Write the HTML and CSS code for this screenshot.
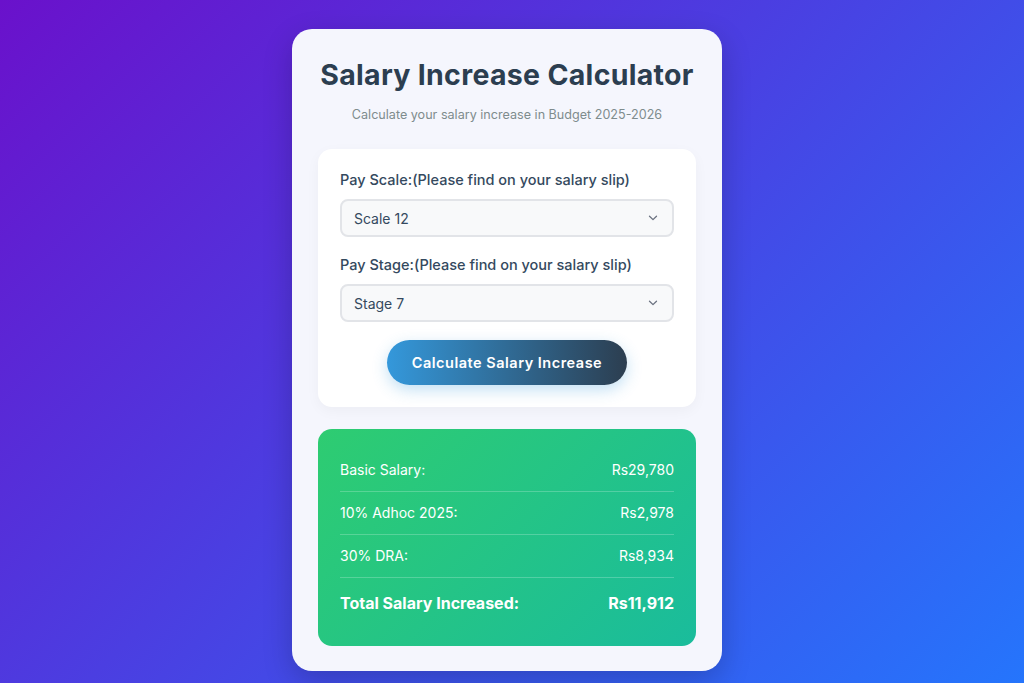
FILE: index.html
```html
<!DOCTYPE html>
<html lang="en">
<head>
<meta charset="utf-8">
<title>Salary Increase Calculator</title>
<link rel="stylesheet" href="styles.css">
</head>
<body>
<div class="card">
  <h1 class="title">Salary Increase Calculator</h1>
  <p class="subtitle">Calculate your salary increase in Budget 2025-2026</p>
  <div class="form-box">
    <label class="label">Pay Scale:(Please find on your salary slip)</label>
    <div class="select-wrap">
      <select class="select"><option>Scale 12</option></select>
      <svg class="chev" width="10" height="6" viewBox="0 0 10 6"><path d="M1.5 1.2 L5 4.6 L8.5 1.2" fill="none" stroke="#6b7280" stroke-width="1.3" stroke-linecap="round" stroke-linejoin="round"/></svg>
    </div>
    <label class="label label-2">Pay Stage:(Please find on your salary slip)</label>
    <div class="select-wrap">
      <select class="select"><option>Stage 7</option></select>
      <svg class="chev" width="10" height="6" viewBox="0 0 10 6"><path d="M1.5 1.2 L5 4.6 L8.5 1.2" fill="none" stroke="#6b7280" stroke-width="1.3" stroke-linecap="round" stroke-linejoin="round"/></svg>
    </div>
    <div class="btn-row">
      <button class="btn">Calculate Salary Increase</button>
    </div>
  </div>
  <div class="results">
    <div class="row"><span>Basic Salary:</span><span class="val">Rs29,780</span></div>
    <div class="row"><span>10% Adhoc 2025:</span><span class="val">Rs2,978</span></div>
    <div class="row"><span>30% DRA:</span><span class="val">Rs8,934</span></div>
    <div class="row total"><span>Total Salary Increased:</span><span class="val">Rs11,912</span></div>
  </div>
</div>
</body>
</html>
```

FILE: styles.css
```css
* { box-sizing: border-box; }
html, body { margin: 0; }
body {
  min-height: 683px;
  background: linear-gradient(135deg, #6a11cb 0%, #2575fc 100%);
  font-family: "Inter", "Open Sans", "Liberation Sans", sans-serif;
  padding: 29px 10px 0 0;
  color: #2c3e50;
}
.card {
  width: 430px;
  height: 642px;
  margin: 0 auto;
  background: #f5f6fd;
  border-radius: 20px;
  padding: 22px 26px 26px;
  box-shadow: 0 10px 30px rgba(0, 0, 0, 0.2);
}
.title {
  margin: 0;
  text-align: center;
  font-size: 28.5px;
  line-height: 48px;
  font-weight: 700;
  color: #2c3e50;
  letter-spacing: 0.3px;
}
.subtitle {
  margin: 8px 0 0;
  text-align: center;
  font-size: 12.6px;
  line-height: 16px;
  color: #7f8c8d;
}
.form-box {
  margin-top: 26px;
  background: #ffffff;
  border-radius: 14px;
  padding: 21px 22px 22px;
  box-shadow: 0 4px 14px rgba(0, 0, 0, 0.04);
}
.label {
  display: block;
  font-size: 14.5px;
  line-height: 20px;
  font-weight: 500;
  color: #34495e;
  margin-bottom: 9px;
}
.label-2 { margin-top: 18px; }
.select-wrap { position: relative; }
.select {
  display: block;
  width: 100%;
  height: 38px;
  appearance: none;
  -webkit-appearance: none;
  border: 2px solid #e2e4e8;
  border-radius: 8px;
  background: #f8f9fa;
  padding: 0 12px;
  font-family: inherit;
  font-size: 14px;
  color: #34495e;
}
.chev {
  position: absolute;
  right: 16px;
  top: 16px;
}
.btn-row {
  display: flex;
  justify-content: center;
  margin-top: 18px;
}
.btn {
  width: 240px;
  height: 45px;
  border: none;
  border-radius: 23px;
  background: linear-gradient(90deg, #3498db 0%, #2c3e50 100%);
  color: #ffffff;
  font-family: inherit;
  font-size: 14.5px;
  font-weight: 600;
  letter-spacing: 0.5px;
  box-shadow: 0 5px 15px rgba(52, 152, 219, 0.3);
}
.results {
  margin-top: 22px;
  background: linear-gradient(135deg, #2ecc71 0%, #1abc9c 100%);
  border-radius: 14px;
  padding: 20px 22px;
  color: #ffffff;
  height: 217px;
}
.row {
  display: flex;
  justify-content: space-between;
  align-items: center;
  padding: 11px 0;
  font-size: 14px;
  line-height: 20px;
  border-bottom: 1px solid rgba(255, 255, 255, 0.22);
}
.val { font-weight: 400; }
.row.total {
  border-bottom: none;
  padding-top: 14px;
  font-size: 16px;
  line-height: 22px;
  font-weight: 700;
}
.row.total .val { font-weight: 700; }
```
